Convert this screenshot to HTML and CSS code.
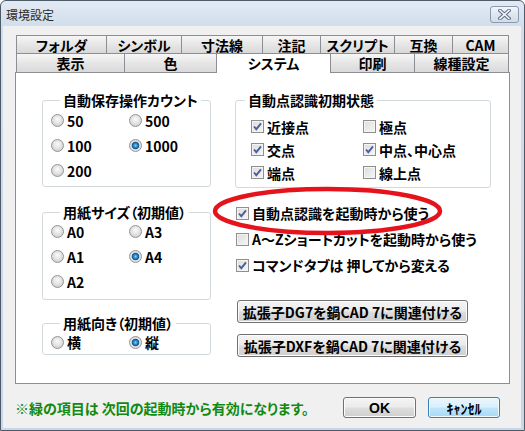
FILE: index.html
```html
<!DOCTYPE html>
<html lang="ja">
<head>
<meta charset="utf-8">
<title>環境設定</title>
<link rel="stylesheet" href="styles.css">
</head>
<body>
<div class="window">
  <div class="titlebar">
    <span class="title">環境設定</span>
    <div class="close">
      <svg width="13" height="11" viewBox="0 0 13 11"><path d="M2 1.5 L11 9.5 M11 1.5 L2 9.5" stroke="#5f6f86" stroke-width="3.6" stroke-linecap="square" fill="none"/><path d="M2 1.5 L11 9.5 M11 1.5 L2 9.5" stroke="#f4f7fb" stroke-width="1.6" stroke-linecap="square" fill="none"/></svg>
    </div>
  </div>
  <div class="client">
    <div class="tabs">
      <div class="tabrow r1">
        <div class="tab">フォルダ</div>
        <div class="tab">シンボル</div>
        <div class="tab">寸法線</div>
        <div class="tab">注記</div>
        <div class="tab">スクリプト</div>
        <div class="tab">互換</div>
        <div class="tab">CAM</div>
      </div>
      <div class="tabrow r2">
        <div class="tab">表示</div>
        <div class="tab">色</div>
        <div class="tab sel">システム</div>
        <div class="tab">印刷</div>
        <div class="tab">線種設定</div>
      </div>
    </div>
    <div class="panel">
      <div class="col left">
        <fieldset class="grp g1">
          <legend>自動保存操作カウント</legend>
          <div class="opts">
            <label class="opt"><span class="rb"></span>50</label>
            <label class="opt"><span class="rb"></span>500</label>
            <label class="opt"><span class="rb"></span>100</label>
            <label class="opt"><span class="rb on"></span>1000</label>
            <label class="opt"><span class="rb"></span>200</label>
          </div>
        </fieldset>
        <fieldset class="grp g2">
          <legend>用紙サイズ（初期値）</legend>
          <div class="opts">
            <label class="opt"><span class="rb"></span>A0</label>
            <label class="opt"><span class="rb"></span>A3</label>
            <label class="opt"><span class="rb"></span>A1</label>
            <label class="opt"><span class="rb on"></span>A4</label>
            <label class="opt"><span class="rb"></span>A2</label>
          </div>
        </fieldset>
        <fieldset class="grp g3">
          <legend>用紙向き（初期値）</legend>
          <div class="opts single">
            <label class="opt"><span class="rb"></span>横</label>
            <label class="opt"><span class="rb on"></span>縦</label>
          </div>
        </fieldset>
      </div>
      <div class="col right">
        <fieldset class="grp g4">
          <legend>自動点認識初期状態</legend>
          <div class="checks">
            <label class="opt"><span class="cb on"><svg width="11" height="11" viewBox="0 0 11 11"><path d="M2 5.5 L4.3 8.2 L9 2.3" stroke="#4b5f99" stroke-width="1.9" fill="none"/></svg></span>近接点</label>
            <label class="opt"><span class="cb"></span>極点</label>
            <label class="opt"><span class="cb on"><svg width="11" height="11" viewBox="0 0 11 11"><path d="M2 5.5 L4.3 8.2 L9 2.3" stroke="#4b5f99" stroke-width="1.9" fill="none"/></svg></span>交点</label>
            <label class="opt"><span class="cb on"><svg width="11" height="11" viewBox="0 0 11 11"><path d="M2 5.5 L4.3 8.2 L9 2.3" stroke="#4b5f99" stroke-width="1.9" fill="none"/></svg></span>中点、中心点</label>
            <label class="opt"><span class="cb on"><svg width="11" height="11" viewBox="0 0 11 11"><path d="M2 5.5 L4.3 8.2 L9 2.3" stroke="#4b5f99" stroke-width="1.9" fill="none"/></svg></span>端点</label>
            <label class="opt"><span class="cb"></span>線上点</label>
          </div>
        </fieldset>
        <div class="standalone">
          <label class="opt"><span class="cb on"><svg width="11" height="11" viewBox="0 0 11 11"><path d="M2 5.5 L4.3 8.2 L9 2.3" stroke="#4b5f99" stroke-width="1.9" fill="none"/></svg></span>自動点認識を起動時から使う</label>
          <label class="opt"><span class="cb"></span>A～Zショートカットを起動時から使う</label>
          <label class="opt"><span class="cb on"><svg width="11" height="11" viewBox="0 0 11 11"><path d="M2 5.5 L4.3 8.2 L9 2.3" stroke="#4b5f99" stroke-width="1.9" fill="none"/></svg></span>コマンドタブは 押してから変える</label>
        </div>
        <div class="assoc">
          <div class="btn wide">拡張子DG7を鍋CAD 7に関連付ける</div>
          <div class="btn wide">拡張子DXFを鍋CAD 7に関連付ける</div>
        </div>
      </div>
      <svg class="mark" width="240" height="56" viewBox="0 0 240 56"><ellipse cx="116.5" cy="26" rx="112.5" ry="22" fill="none" stroke="#e5141c" stroke-width="4.5"/></svg>
    </div>
    <div class="footer">
      <span class="note">※緑の項目は 次回の起動時から有効になります。</span>
      <div class="btn ok">OK</div>
      <div class="btn cancel">ｷｬﾝｾﾙ</div>
    </div>
  </div>
</div>
</body>
</html>
```
FILE: styles.css
```css
* { box-sizing: border-box; }
html, body { margin: 0; padding: 0; }
body {
  width: 525px;
  height: 431px;
  overflow: hidden;
  background: #ffffff;
  font-family: "Noto Sans CJK JP", "Liberation Sans", sans-serif;
  color: #000;
}
.window {
  width: 525px;
  height: 431px;
  border: 1px solid #4f5a68;
  border-radius: 6px 6px 0 0;
  background: linear-gradient(#e2eaf4, #d0ddec 26px, #c7d6e9);
  display: flex;
  flex-direction: column;
  padding: 0 3px 2px 2px;
}
.titlebar {
  height: 25px;
  display: flex;
  align-items: center;
  justify-content: space-between;
  padding-left: 3px;
}
.title {
  font-size: 12px;
  line-height: 14px;
  color: #2a2a2a;
  margin-top: 2px;
}
.close {
  width: 29px;
  height: 17px;
  margin-top: 2px;
  margin-right: 2px;
  border: 1px solid #8a9ab0;
  border-radius: 3px;
  background: linear-gradient(#f3f6fa, #dfe6ef 50%, #d2dbe7);
  display: flex;
  align-items: center;
  justify-content: center;
}
.client {
  flex: 1;
  background: #f0f0f0;
  padding: 9px 11px 0 9px;
  display: flex;
  flex-direction: column;
}
.tabs {
  margin-left: 4px;
  width: 493px;
}
.tabrow {
  display: flex;
}
.tab {
  height: 19px;
  border: 1px solid #8c8e94;
  border-bottom-color: #8c8e94;
  background: linear-gradient(#f6f6f6, #e6e6e6 50%, #d9d9d9);
  font-size: 14px;
  font-weight: bold;
  line-height: 16px;
  display: flex;
  align-items: center;
  justify-content: center;
  font-feature-settings: "palt";
  margin-left: -1px;
}
.tab:first-child { margin-left: 0; }
.r1 .tab:nth-child(1) { width: 91px; }
.r1 .tab:nth-child(2) { width: 76px; }
.r1 .tab:nth-child(3) { width: 82px; }
.r1 .tab:nth-child(4) { width: 59px; }
.r1 .tab:nth-child(5) { width: 75px; }
.r1 .tab:nth-child(6) { width: 59px; }
.r1 .tab:nth-child(7) { width: 57px; }
.r2 { margin-top: -1px; }
.r2 .tab { height: 20px; }
.r2 .tab:nth-child(1) { width: 109px; }
.r2 .tab:nth-child(2) { width: 93px; }
.r2 .tab:nth-child(3) { width: 115px; }
.r2 .tab:nth-child(4) { width: 85px; }
.r2 .tab:nth-child(5) { width: 95px; }
.tab.sel {
  background: #ffffff;
  border-bottom: none;
  position: relative;
  z-index: 2;
  padding-bottom: 2px;
}
.panel {
  position: relative;
  margin-top: -1px;
  margin-left: 3px;
  width: 495px;
  height: 312px;
  border: 1px solid #8c8e94;
  background: #ffffff;
  padding: 20px 0 0 26px;
  display: flex;
  gap: 24px;
  font-size: 14px;
  font-weight: bold;
  font-feature-settings: "palt";
}
.col { display: flex; flex-direction: column; }
.left { width: 169px; }
.right { width: 256px; }
.grp {
  margin: 0;
  padding: 0;
  border: 1px solid #d3dade;
  border-radius: 3px;
  min-width: 0;
}
.grp legend {
  padding: 0 3px;
  margin-left: 17px;
  font-size: 14px;
  line-height: 14px;
  height: 14px;
}
.g4 legend { margin-left: 9px; }
.opts {
  display: grid;
  grid-template-columns: 78px 1fr;
  grid-auto-rows: 25px;
  padding: 1px 0 3px 8px;
}
.g2 { margin-top: 18px; }
.g2 .opts { padding-top: 0; padding-bottom: 5px; }
.g3 { margin-top: 16px; }
.opts.single { grid-auto-rows: 24px; padding-top: 0; padding-bottom: 0; }
.opt {
  display: flex;
  align-items: center;
  font-size: 14px;
  line-height: 16px;
  white-space: nowrap;
}
.rb {
  width: 13px;
  height: 13px;
  border-radius: 50%;
  border: 1px solid #949494;
  background: radial-gradient(circle at 50% 40%, #fbfbfb 0, #e9e9e9 3px, #cfcfcf 7px);
  margin-right: 3px;
  flex: none;
}
.rb.on {
  background: radial-gradient(circle at 50% 50%, #7ed0f2 0, #2b86c4 2px, #0d5590 3.4px, #e6e6e6 4.2px, #d2d2d2 7px);
}
.checks {
  display: grid;
  grid-template-columns: 112px 1fr;
  grid-auto-rows: 23px;
  padding: 8px 0 3px 15px;
}
.cb {
  width: 13px;
  height: 13px;
  border: 1px solid #8e8f8f;
  background: linear-gradient(135deg, #dcdcdc, #f6f6f6);
  box-shadow: inset 0 0 0 1px #f4f4f4;
  margin-right: 3px;
  flex: none;
  display: flex;
  align-items: center;
  justify-content: center;
}
.cb svg { display: block; }
.standalone {
  margin-top: 12px;
  display: grid;
  grid-auto-rows: 26px;
  padding-left: 1px;
}
.assoc {
  margin-top: 22px;
  margin-left: 2px;
  display: flex;
  flex-direction: column;
  gap: 11px;
}
.btn {
  border: 1px solid #707070;
  border-radius: 3px;
  background: linear-gradient(#f4f4f4, #ebebeb 48%, #dddddd 52%, #cfcfcf);
  box-shadow: inset 0 0 0 1px #fcfcfc;
  display: flex;
  align-items: center;
  justify-content: center;
  font-size: 14px;
  font-weight: bold;
  line-height: 16px;
  font-feature-settings: "palt";
}
.btn.wide { width: 231px; height: 23px; }
.mark {
  position: absolute;
  left: 195px;
  top: 112px;
  pointer-events: none;
}
.footer {
  margin-top: 13px;
  height: 21px;
  display: flex;
  align-items: center;
  padding-right: 10px;
  padding-left: 3px;
}
.note {
  flex: 1;
  color: #118a11;
  font-size: 14px;
  font-weight: bold;
  line-height: 16px;
  font-feature-settings: "palt";
}
.btn.ok { width: 73px; height: 21px; margin-right: 12px; font-family: "Liberation Sans", sans-serif; }
.btn.cancel {
  width: 72px;
  height: 21px;
  border-color: #3c7fb1;
  background: linear-gradient(#eaf6fd, #d9f0fc 48%, #bee6fd 52%, #a7d9f5);
  box-shadow: inset 0 0 0 1px #f2fafe;
}
```
